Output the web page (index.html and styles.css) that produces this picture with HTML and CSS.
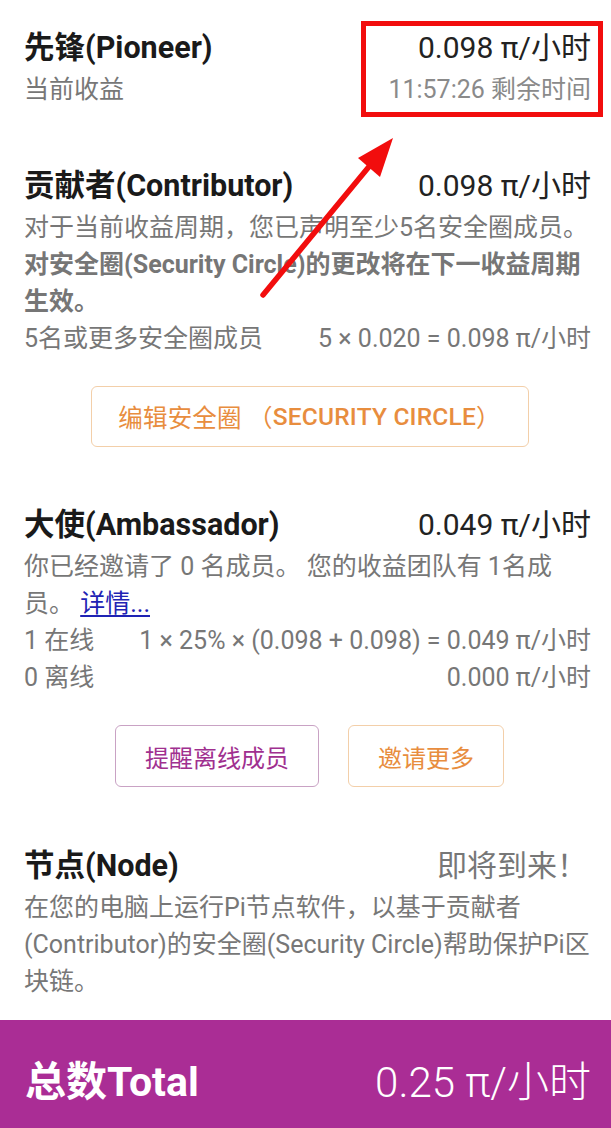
FILE: index.html
```html
<!DOCTYPE html>
<html lang="zh-CN">
<head>
<meta charset="utf-8">
<title>收益</title>
<link rel="stylesheet" href="styles.css">
</head>
<body>
<div class="page">
  <section class="section">
    <div class="row">
      <span class="title">先锋(Pioneer)</span>
      <span class="value">0.098 π/小时</span>
    </div>
    <div class="row desc">
      <span>当前收益</span>
      <span class="muted">11:57:26 剩余时间</span>
    </div>
  </section>

  <section class="section">
    <div class="row">
      <span class="title">贡献者(Contributor)</span>
      <span class="value">0.098 π/小时</span>
    </div>
    <p class="desc">对于当前收益周期，您已声明至少5名安全圈成员。<br><strong>对安全圈(Security Circle)的更改将在下一收益周期<br>生效。</strong></p>
    <div class="row desc">
      <span>5名或更多安全圈成员</span>
      <span>5 × 0.020 = 0.098 π/小时</span>
    </div>
    <div class="actions">
      <button class="btn btn-orange btn-wide">编辑安全圈 （ <span class="latin">SECURITY CIRCLE</span>）</button>
    </div>
  </section>

  <section class="section">
    <div class="row">
      <span class="title">大使(Ambassador)</span>
      <span class="value">0.049 π/小时</span>
    </div>
    <p class="desc">你已经邀请了 0 名成员。 您的收益团队有 1名成<br>员。 <a class="link" href="#">详情...</a></p>
    <div class="row desc">
      <span>1 在线</span>
      <span>1 × 25% × (0.098 + 0.098) = 0.049 π/小时</span>
    </div>
    <div class="row desc">
      <span>0 离线</span>
      <span>0.000 π/小时</span>
    </div>
    <div class="actions">
      <button class="btn btn-purple">提醒离线成员</button>
      <button class="btn btn-orange">邀请更多</button>
    </div>
  </section>

  <section class="section last">
    <div class="row">
      <span class="title">节点(Node)</span>
      <span class="value soon">即将到来！</span>
    </div>
    <p class="desc">在您的电脑上运行Pi节点软件，以基于贡献者<br>(Contributor)的安全圈(Security Circle)帮助保护Pi区<br>块链。</p>
  </section>
</div>

<footer class="total">
  <span class="total-label">总数Total</span>
  <span class="total-value">0.25 π/小时</span>
</footer>

<div class="annot-box"></div>
<svg class="annot-arrow" width="611" height="1128" viewBox="0 0 611 1128">
  <line x1="263" y1="295" x2="372" y2="163" stroke="#f20d0d" stroke-width="5.5" stroke-linecap="round"/>
  <polygon points="393,138 358,158 380,177" fill="#f20d0d"/>
</svg>
</body>
</html>
```

FILE: styles.css
```css
* { box-sizing: border-box; }

html, body {
  margin: 0;
  padding: 0;
}

body {
  width: 611px;
  height: 1128px;
  overflow: hidden;
  position: relative;
  background: #ffffff;
  font-family: Roboto, "Noto Sans CJK SC", sans-serif;
  color: #222;
}

.page {
  padding: 25px 20px 0 24px;
}

.section + .section {
  margin-top: 55px;
}

.section.last {
  margin-top: 56px;
}

.row {
  display: flex;
  justify-content: space-between;
  align-items: baseline;
  white-space: nowrap;
}

.title {
  font-size: 30.5px;
  font-weight: 700;
  line-height: 46px;
  color: #1a1a1a;
}

.value {
  font-size: 30px;
  line-height: 46px;
  color: #222;
}

.value.soon {
  color: #777;
  padding-right: 4px;
}

.desc {
  margin: 0;
  font-size: 25px;
  line-height: 37px;
  color: #777;
  white-space: nowrap;
}

.desc strong {
  font-weight: 700;
  color: #767676;
}

.muted {
  color: #8a8a8a;
}

.link {
  color: #1f23b4;
  text-decoration: underline;
  text-underline-offset: 3px;
}

.actions {
  display: flex;
  justify-content: center;
  gap: 29px;
  margin-top: 29px;
  padding-left: 4px;
}

.btn {
  height: 62px;
  padding: 0 29px;
  background: #fff;
  border-radius: 6px;
  font-family: Roboto, "Noto Sans CJK SC", sans-serif;
  font-size: 24px;
  display: flex;
  align-items: center;
  justify-content: center;
  white-space: nowrap;
}

.btn-wide {
  width: 438px;
  height: 61px;
  font-size: 24.5px;
  letter-spacing: 0.2px;
  padding: 0;
}

.btn-orange {
  border: 1.5px solid #f3cfa9;
  color: #e88d3e;
}

.btn-purple {
  border: 1.5px solid #c9a2c4;
  color: #a0308f;
}

.latin {
  font-weight: 500;
}

.total {
  margin-top: 20px;
  height: 116px;
  padding: 0 20px 0 25px;
  background: #aa2d95;
  color: #fff;
  display: flex;
  justify-content: space-between;
  align-items: center;
  white-space: nowrap;
}

.total-label {
  font-size: 41px;
  font-weight: 700;
}

.total-value {
  font-size: 42px;
  font-weight: 300;
}

.annot-box {
  position: absolute;
  left: 361px;
  top: 21px;
  width: 242px;
  height: 96px;
  border: 5px solid #f20d0d;
  pointer-events: none;
}

.annot-arrow {
  position: absolute;
  left: 0;
  top: 0;
  pointer-events: none;
}
```
